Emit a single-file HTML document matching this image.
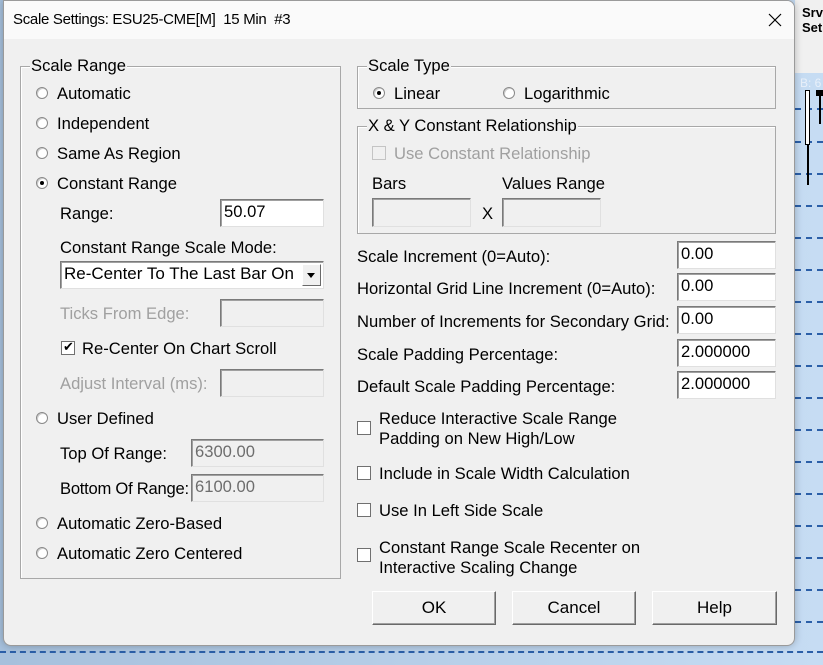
<!DOCTYPE html>
<html><head><style>
*{margin:0;padding:0;box-sizing:border-box}
body{width:823px;height:665px;overflow:hidden;position:relative;font-family:"Liberation Sans",Arial,sans-serif;font-size:16.6px;color:#000;background:linear-gradient(90deg,#a6c0dc,#c6dcf3)}
.a{position:absolute;white-space:nowrap;line-height:18px}
.dlg{position:absolute;left:3px;top:0;width:792px;height:646px;background:#f0f0f0;border:1px solid #9a9a9a;border-radius:0 8px 8px 8px;box-shadow:0 0 8px rgba(0,0,0,.25);overflow:hidden}
.tb{position:absolute;left:0;top:0;width:100%;height:38px;background:#fafafa}
.grp{position:absolute;border:1px solid #a8a8a8;box-shadow:inset 1px 1px 0 #fff}
.lg{position:absolute;background:#f0f0f0;padding:0 1px;top:-10px;left:9px;line-height:18px}
.rb{position:absolute;width:12px;height:12px;border-radius:50%;border:1px solid #8a8a8a;background:#fff;box-shadow:inset 1px 1px 0 #ccc}
.rb.on::after{content:"";position:absolute;left:3px;top:3px;width:4px;height:4px;border-radius:50%;background:#000}
.cb{position:absolute;width:14px;height:14px;border:1px solid #707070;background:#fff}
.cb.dis{border-color:#c4c4c4;background:#f0f0f0}
.in{position:absolute;background:#fff;border:1px solid #7a7a7a;border-right-color:#e0e0e0;border-bottom-color:#e0e0e0;box-shadow:inset 1px 1px 0 #a0a0a0;padding:3px 0 0 3px;line-height:18px}
.in.dis{background:#f0f0f0;color:#6d6d6d}
.g{color:#a0a0a0}
.btn{position:absolute;height:34px;border:1px solid;border-color:#fff #696969 #696969 #fff;box-shadow:inset -1px -1px 0 #a0a0a0;text-align:center;line-height:32px;font-size:17px}
.dash{position:absolute;left:795px;width:28px;height:0;border-top:2px dashed #2b5fa8}
</style></head><body>
<div style="position:absolute;left:795px;top:0;width:28px;height:73px;background:#f0f0f0"></div>
<div class="a" style="left:802px;top:5px;font-size:13px;font-weight:bold;line-height:15px">Srv<br>Set</div>
<div class="a" style="left:800px;top:74px;font-size:12px;color:#e8f0fa">B: 6</div>
<div class="dash" style="top:108px"></div><div class="dash" style="top:141px"></div><div class="dash" style="top:173px"></div><div class="dash" style="top:205px"></div><div class="dash" style="top:237px"></div><div class="dash" style="top:269px"></div><div class="dash" style="top:301px"></div><div class="dash" style="top:333px"></div><div class="dash" style="top:365px"></div><div class="dash" style="top:397px"></div><div class="dash" style="top:429px"></div><div class="dash" style="top:461px"></div><div class="dash" style="top:493px"></div><div class="dash" style="top:525px"></div><div class="dash" style="top:557px"></div><div class="dash" style="top:589px"></div><div class="dash" style="top:621px"></div>
<div style="position:absolute;left:0;top:651px;width:823px;border-top:2px dashed #2b5fa8"></div>
<div style="position:absolute;left:805px;top:90px;width:5px;height:55px;background:#fff;border:1px solid #000"></div>
<div style="position:absolute;left:807px;top:145px;width:2px;height:40px;background:#000"></div>
<div style="position:absolute;left:816px;top:90px;width:7px;height:6px;background:#000"></div>
<div style="position:absolute;left:819px;top:96px;width:2px;height:28px;background:#000"></div>

<div class="dlg">
<div class="tb"></div>
<div class="a" style="left:9px;top:10px;font-size:15px;letter-spacing:-.3px">Scale Settings: ESU25-CME[M]&nbsp; 15 Min&nbsp; #3</div>
<svg style="position:absolute;left:764px;top:12px" width="14" height="14" viewBox="0 0 14 14"><path d="M1 1L13 13M13 1L1 13" stroke="#000" stroke-width="1.2" fill="none"/></svg>
</div>

<div class="grp" style="left:20px;top:66px;width:321px;height:513px"><div class="lg">Scale Range</div></div>
<div class="rb" style="left:36px;top:87px"></div><div class="a" style="left:57px;top:85px">Automatic</div>
<div class="rb" style="left:36px;top:117px"></div><div class="a" style="left:57px;top:115px">Independent</div>
<div class="rb" style="left:36px;top:147px"></div><div class="a" style="left:57px;top:145px">Same As Region</div>
<div class="rb on" style="left:36px;top:177px"></div><div class="a" style="left:57px;top:175px">Constant Range</div>
<div class="a" style="left:60px;top:205px">Range:</div>
<div class="in" style="left:220px;top:199px;width:104px;height:28px">50.07</div>
<div class="a" style="left:60px;top:239px">Constant Range Scale Mode:</div>
<div class="in" style="left:60px;top:261px;width:264px;height:28px;font-size:17px">Re-Center To The Last Bar On</div>
<div style="position:absolute;left:302px;top:264px;width:19px;height:22px;background:#f0f0f0;border:1px solid;border-color:#fff #696969 #696969 #fff"></div>
<div style="position:absolute;left:307px;top:273px;border:4px solid transparent;border-top:5px solid #000;border-bottom:0"></div>
<div class="a g" style="left:60px;top:305px">Ticks From Edge:</div>
<div class="in dis" style="left:220px;top:299px;width:104px;height:28px"></div>
<div class="cb" style="left:61px;top:341px"></div><div class="a" style="left:63px;top:338px;font-size:13px">✔</div>
<div class="a" style="left:82px;top:340px">Re-Center On Chart Scroll</div>
<div class="a g" style="left:60px;top:375px">Adjust Interval (ms):</div>
<div class="in dis" style="left:220px;top:369px;width:104px;height:28px"></div>
<div class="rb" style="left:36px;top:412px"></div><div class="a" style="left:57px;top:410px">User Defined</div>
<div class="a" style="left:60px;top:445px">Top Of Range:</div>
<div class="in dis" style="left:191px;top:439px;width:133px;height:28px">6300.00</div>
<div class="a" style="left:60px;top:480px;letter-spacing:-.25px">Bottom Of Range:</div>
<div class="in dis" style="left:191px;top:474px;width:133px;height:28px">6100.00</div>
<div class="rb" style="left:36px;top:517px"></div><div class="a" style="left:57px;top:515px">Automatic Zero-Based</div>
<div class="rb" style="left:36px;top:547px"></div><div class="a" style="left:57px;top:545px">Automatic Zero Centered</div>

<div class="grp" style="left:357px;top:66px;width:419px;height:43px"><div class="lg">Scale Type</div></div>
<div class="rb on" style="left:373px;top:87px"></div><div class="a" style="left:394px;top:85px">Linear</div>
<div class="rb" style="left:503px;top:87px"></div><div class="a" style="left:524px;top:85px">Logarithmic</div>

<div class="grp" style="left:357px;top:126px;width:419px;height:108px"><div class="lg">X &amp; Y Constant Relationship</div></div>
<div class="cb dis" style="left:372px;top:146px"></div><div class="a g" style="left:394px;top:145px">Use Constant Relationship</div>
<div class="a" style="left:372px;top:175px">Bars</div>
<div class="a" style="left:502px;top:175px">Values Range</div>
<div class="in dis" style="left:372px;top:198px;width:99px;height:29px"></div>
<div class="a" style="left:482px;top:205px">X</div>
<div class="in dis" style="left:502px;top:198px;width:99px;height:29px"></div>

<div class="a" style="left:357px;top:248px">Scale Increment (0=Auto):</div>
<div class="in" style="left:677px;top:241px;width:99px;height:28px">0.00</div>
<div class="a" style="left:357px;top:280px">Horizontal Grid Line Increment (0=Auto):</div>
<div class="in" style="left:677px;top:273px;width:99px;height:28px">0.00</div>
<div class="a" style="left:357px;top:313px">Number of Increments for Secondary Grid:</div>
<div class="in" style="left:677px;top:306px;width:99px;height:28px">0.00</div>
<div class="a" style="left:357px;top:346px">Scale Padding Percentage:</div>
<div class="in" style="left:677px;top:339px;width:99px;height:28px">2.000000</div>
<div class="a" style="left:357px;top:378px">Default Scale Padding Percentage:</div>
<div class="in" style="left:677px;top:371px;width:99px;height:28px">2.000000</div>

<div class="cb" style="left:357px;top:421px"></div>
<div class="a" style="left:379px;top:409px;line-height:20px">Reduce Interactive Scale Range<br>Padding on New High/Low</div>
<div class="cb" style="left:357px;top:466px"></div><div class="a" style="left:379px;top:465px">Include in Scale Width Calculation</div>
<div class="cb" style="left:357px;top:503px"></div><div class="a" style="left:379px;top:502px">Use In Left Side Scale</div>
<div class="cb" style="left:357px;top:548px"></div>
<div class="a" style="left:379px;top:538px;line-height:20px">Constant Range Scale Recenter on<br>Interactive Scaling Change</div>

<div class="btn" style="left:372px;top:591px;width:124px">OK</div>
<div class="btn" style="left:512px;top:591px;width:124px">Cancel</div>
<div class="btn" style="left:652px;top:591px;width:125px">Help</div>
</body></html>
